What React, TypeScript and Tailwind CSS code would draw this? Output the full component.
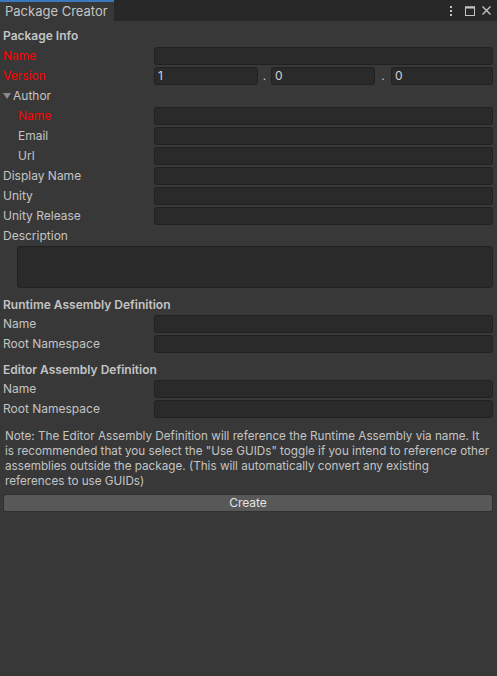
import { ReactNode } from "react";

function Field({ value = "", className = "" }: { value?: string; className?: string }) {
  return (
    <div className={`h-[18px] rounded-[3px] border border-[#212121] bg-[#2a2a2a] px-[3px] text-[12px] leading-[16px] text-[#d2d2d2] ${className}`}>
      {value}
    </div>
  );
}

function Row({ label, red, indent, children }: { label: string; red?: boolean; indent?: boolean; children?: ReactNode }) {
  return (
    <div className="flex h-[20px] items-center">
      <span className={`w-[151px] shrink-0 ${indent ? "pl-[15px]" : ""} ${red ? "text-[#ff0000]" : "text-[#c4c4c4]"}`}>{label}</span>
      <div className="flex-1">{children ?? <Field />}</div>
    </div>
  );
}

function Header({ children, short }: { children: ReactNode; short?: boolean }) {
  return <div className={`flex ${short ? "h-[19px]" : "h-[20px]"} items-center font-semibold text-[#c4c4c4]`}>{children}</div>;
}

export default function App() {
  return (
    <div className="flex h-[676px] w-[497px] flex-col bg-[#383838] text-[12px]" style={{ fontFamily: "Inter, 'Noto Sans', sans-serif" }}>
      <div className="flex h-[21px] shrink-0 items-stretch justify-between bg-[#282828]">
        <div className="flex w-[114px] items-center border-t-2 border-[#3a79bb] bg-[#383838] pl-[5px] text-[13px] text-[#c4c4c4]">
          Package Creator
        </div>
        <div className="flex items-center pr-[6px] text-[#c4c4c4]">
          <svg width="4" height="12" viewBox="0 0 4 12" className="mr-[12px]"><rect x="1" y="1" width="2" height="2" fill="#c4c4c4" /><rect x="1" y="5" width="2" height="2" fill="#c4c4c4" /><rect x="1" y="9" width="2" height="2" fill="#c4c4c4" /></svg>
          <svg width="10" height="10" viewBox="0 0 10 10" className="mr-[7px]"><rect x="0.5" y="1" width="9" height="8.5" fill="none" stroke="#c4c4c4" /><rect x="0" y="0.5" width="10" height="2" fill="#c4c4c4" /></svg>
          <svg width="9" height="9" viewBox="0 0 9 9"><path d="M0.5 0.5 L8.5 8.5 M8.5 0.5 L0.5 8.5" stroke="#c4c4c4" strokeWidth="1.4" /></svg>
        </div>
      </div>
      <div className="flex flex-col px-[3px] pr-[4px] pt-[5px]">
        <Header>Package Info</Header>
        <Row label="Name" red />
        <Row label="Version" red>
          <div className="flex items-center">
            <Field value="1" className="w-[104px]" />
            <span className="w-[13px] text-center text-[#c4c4c4]">.</span>
            <Field value="0" className="w-[104px]" />
            <span className="w-[16px] text-center text-[#c4c4c4]">.</span>
            <Field value="0" className="flex-1" />
          </div>
        </Row>
        <div className="flex h-[20px] items-center text-[#c4c4c4]">
          <svg width="8" height="8" viewBox="0 0 8 8" className="mr-[2px]"><path d="M0 1 L8 1 L4 7 Z" fill="#8a8a8a" /></svg>
          Author
        </div>
        <Row label="Name" red indent />
        <Row label="Email" indent />
        <Row label="Url" indent />
        <Row label="Display Name" />
        <Row label="Unity" />
        <Row label="Unity Release" />
        <div className="flex h-[20px] items-center text-[#c4c4c4]">Description</div>
        <div className="pl-[14px]">
          <Field className="h-[42px]" />
        </div>
        <div className="h-[7px]" />
        <Header short>Runtime Assembly Definition</Header>
        <Row label="Name" />
        <Row label="Root Namespace" />
        <div className="h-[6px]" />
        <Header short>Editor Assembly Definition</Header>
        <Row label="Name" />
        <Row label="Root Namespace" />
        <p className="mt-[10px] px-[2px] text-[11.7px] leading-[15px] text-[#c4c4c4]">
          Note: The Editor Assembly Definition will reference the Runtime Assembly via name. It is recommended that you select the "Use GUIDs" toggle if you intend to reference other assemblies outside the package. (This will automatically convert any existing references to use GUIDs)
        </p>
        <button className="mt-[5px] h-[18px] rounded-[3px] border border-[#303030] bg-[#585858] text-[12px] leading-[16px] text-[#e4e4e4]">
          Create
        </button>
      </div>
    </div>
  );
}
